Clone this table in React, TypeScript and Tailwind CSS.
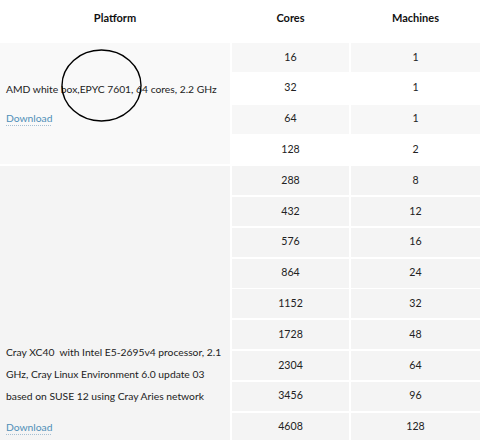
const amdRuns: [string, string][] = [
  ["16", "1"],
  ["32", "1"],
  ["64", "1"],
  ["128", "2"],
];

const crayRuns: [string, string][] = [
  ["288", "8"],
  ["432", "12"],
  ["576", "16"],
  ["864", "24"],
  ["1152", "32"],
  ["1728", "48"],
  ["2304", "64"],
  ["3456", "96"],
  ["4608", "128"],
  ["6912", "192"],
  ["9216", "256"],
  ["13824", "384"],
  ["18432", "512"],
  ["27648", "768"],
  ["36864", "1024"],
];

function DownloadLink() {
  return (
    <a
      href="#"
      className="text-[#4f8fb8] underline decoration-dotted decoration-[#a7c0d2] underline-offset-[3px]"
    >
      Download
    </a>
  );
}

export default function App() {
  return (
    <div className="relative h-[440px] w-[480px] overflow-hidden bg-white font-['Lato','Liberation_Sans',sans-serif] text-[10.3px] text-[#222]">
      {/* header */}
      <div className="grid h-[43px] grid-cols-[230px_117px_1fr] gap-x-[2px] pt-[11px] text-center text-[11px] font-bold leading-[14px] text-[#111]">
        <div>Platform</div>
        <div>Cores</div>
        <div>Machines</div>
      </div>

      <div className="grid grid-cols-[230px_117px_1fr] auto-rows-[29px] gap-x-[2px] gap-y-[1.8px] text-[10.6px]">
        {/* AMD block */}
        <div className="row-span-4 flex flex-col justify-center bg-[#f9f9f9] px-[6px] text-[10.3px] leading-[22px]">
          <p className="whitespace-nowrap">AMD white box,EPYC 7601, 64 cores, 2.2 GHz</p>
          <p className="mt-[7px]">
            <DownloadLink />
          </p>
        </div>
        {amdRuns.map(([cores, machines], i) => {
          const bg = i % 2 === 0 ? "bg-[#f7f7f7]" : "bg-white";
          return [
            <div key={`c${cores}`} className={`flex items-center justify-center ${bg}`}>
              {cores}
            </div>,
            <div key={`m${cores}`} className={`flex items-center justify-center ${bg}`}>
              {machines}
            </div>,
          ];
        })}

        {/* Cray block */}
        <div className="row-span-15 flex flex-col justify-center bg-[#f4f4f4] px-[6px] pb-[13px] text-[10.3px] leading-[22px]">
          <p className="whitespace-nowrap">
            Cray XC40&nbsp; with Intel E5-2695v4 processor, 2.1
            <br />
            GHz, Cray Linux Environment 6.0 update 03
            <br />
            based on SUSE 12 using Cray Aries network
          </p>
          <p className="mt-[9px]">
            <DownloadLink />
          </p>
        </div>
        {crayRuns.map(([cores, machines]) => [
          <div key={`c${cores}`} className="flex items-center justify-center bg-[#f4f4f4]">
            {cores}
          </div>,
          <div key={`m${cores}`} className="flex items-center justify-center bg-[#f4f4f4]">
            {machines}
          </div>,
        ])}
      </div>

      {/* hand-drawn annotation circle */}
      <svg
        className="pointer-events-none absolute left-[60px] top-[48px]"
        width="84"
        height="76"
        viewBox="0 0 84 76"
      >
        <ellipse cx="41.5" cy="37.5" rx="39.5" ry="35.5" fill="none" stroke="#000" strokeWidth="1.4" />
      </svg>
    </div>
  );
}
